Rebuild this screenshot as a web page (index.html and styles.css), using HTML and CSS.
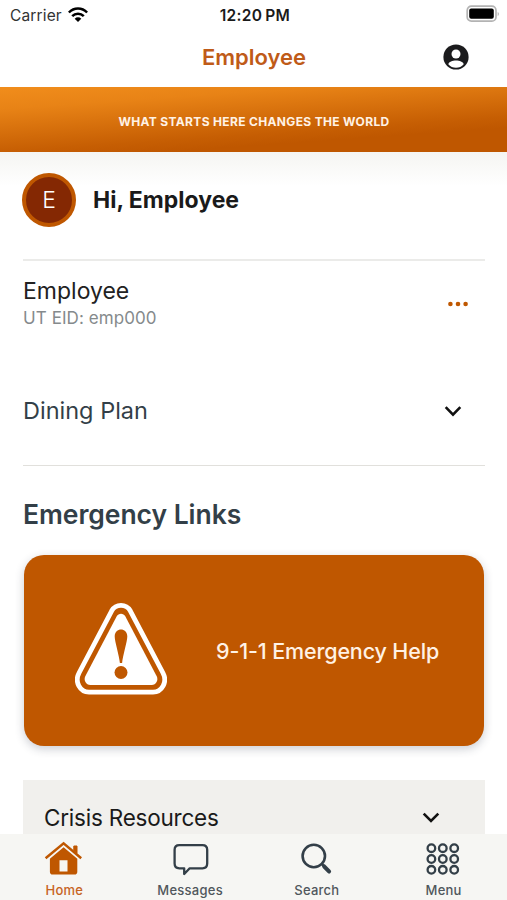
FILE: index.html
```html
<!DOCTYPE html>
<html lang="en">
<head>
<meta charset="utf-8">
<title>Employee</title>
<link rel="stylesheet" href="styles.css">
</head>
<body>
<div class="app">
  <div class="status">
    <div class="carrier"><span class="carrier-name">Carrier</span>
      <svg class="wifi" width="20" height="15" viewBox="0 0 20 15" fill="none" stroke="#000" stroke-width="2.5"><path d="M.9 5.5C6 .2 14 .2 19.1 5.5M4.2 9.1c3.2-3.3 8.4-3.3 11.6 0"/><path d="M6.7 11.7a4.7 4.7 0 0 1 6.6 0L10 15z" fill="#000" stroke="none"/></svg>
    </div>
    <span class="clock">12:20<span class="pm">PM</span></span>
    <svg class="battery" width="34" height="18" viewBox="0 0 34 18"><rect x="1.2" y="1.2" width="28.8" height="15" rx="4.2" fill="#fff" stroke="#b3b3b3" stroke-width="1.7"/><rect x="3.2" y="3.4" width="24.6" height="10.4" rx="2" fill="#000"/><path d="M31.7 7v4c1.6-.6 1.6-3.4 0-4z" fill="#b3b3b3"/></svg>
  </div>
  <header class="navbar">
    <h1 class="title">Employee</h1>
    <svg class="account" width="26" height="26" viewBox="0 0 26 26"><circle cx="13" cy="13" r="12.6" fill="#1b1b1d"/><circle cx="13" cy="10" r="4.5" fill="#fff"/><path d="M5.300 20.200c1.300-4.800 14.100-4.800 15.400 0C17 25 9 25 5.300 20.200z" fill="#fff"/></svg>
  </header>
  <div class="banner"><span class="motto">WHAT STARTS HERE CHANGES THE WORLD</span></div>
  <main class="content">
    <section class="greeting">
      <div class="avatar">E</div>
      <h2 class="hello">Hi, Employee</h2>
    </section>
    <section class="profile">
      <div><div class="name">Employee</div><div class="eid">UT EID: emp000</div></div>
      <svg class="more" width="22" height="6" viewBox="0 0 22 6" fill="#bf5700"><circle cx="3.400" cy="3" r="2.300"/><circle cx="11" cy="3" r="2.300"/><circle cx="18.600" cy="3" r="2.300"/></svg>
    </section>
    <section class="dining">
      <span class="dining-label">Dining Plan</span>
      <svg class="chevron" width="18" height="12" viewBox="0 0 18 12"><path d="M1.700 1.200 9 8.700l7.300-7.500"/></svg>
    </section>
    <h2 class="links-title">Emergency Links</h2>
    <a class="emergency">
      <svg class="warning" width="92" height="92" viewBox="0 0 92 92"><path d="M36.700 7.800c4.200-7.200 14.400-7.200 18.600 0l32.700 62.200c4.700 9-1 19.200-10 19.200H14c-9 0-14.700-10.200-10-19.200z" fill="none" stroke="#fff" stroke-width="4.800"/><path d="M41.600 13.500c2-3.600 6.800-3.600 8.800 0l31.300 59.800c2 4-.7 8.700-5 8.700H15.300c-4.300 0-7-4.700-5-8.700z" fill="#fff"/><path d="M39.700 33.500c0-9.200 12.600-9.200 12.600 0 0 5-4.500 19-5.200 26.500h-2.200c-.7-7.500-5.200-21.500-5.200-26.500z" fill="#bf5700"/><circle cx="46" cy="69.500" r="6.500" fill="#bf5700"/></svg>
      <span class="help">9-1-1 Emergency Help</span>
    </a>
    <section class="crisis">
      <span class="crisis-label">Crisis Resources</span>
      <svg class="chevron" width="18" height="12" viewBox="0 0 18 12"><path d="M1.700 1.700 9 9l7.300-7.300"/></svg>
    </section>
  </main>
  <nav class="tabs">
    <a class="tab active">
      <svg width="38" height="38" viewBox="0 0 38 38"><path d="M1.600 18.200 19.600 3.300l17.600 14.900" fill="none" stroke="#bf5700" stroke-width="2.500"/><path d="M29.800 10.500V6h3.200v7.500z" fill="#bf5700" stroke="#bf5700"/><path d="M19.600 7.300 5.900 18.800v13q0 2.800 2.800 2.800h21.800q2.800 0 2.800-2.800v-13zM15.500 20.300h8v11.200h-8z" fill="#bf5700" fill-rule="evenodd"/></svg>
      <span class="label home">Home</span>
    </a>
    <a class="tab">
      <svg width="38" height="38" viewBox="0 0 38 38"><path d="M8.300 5.100h23.200q4.700 0 4.700 4.700v13.800q0 4.700-4.700 4.700H18.700L13.200 34v-5.700H8.300q-4.700 0-4.700-4.700V9.800q0-4.700 4.700-4.700z" fill="none" stroke="#333f48" stroke-width="2.300" stroke-linejoin="round"/></svg>
      <span class="label messages">Messages</span>
    </a>
    <a class="tab">
      <svg width="38" height="38" viewBox="0 0 38 38" fill="none" stroke="#333f48" stroke-linecap="round"><circle cx="15.800" cy="16" r="11.200" stroke-width="2.600"/><path d="m24 24.200 2.400 2.400" stroke-width="2.600"/><path d="m26.300 26.600 4.700 4.800" stroke-width="4.200"/></svg>
      <span class="label search">Search</span>
    </a>
    <a class="tab">
      <svg width="38" height="38" viewBox="0 0 38 38" fill="none" stroke="#333f48" stroke-width="2.300"><circle cx="6.400" cy="8.200" r="3.800"/><circle cx="17.800" cy="8.200" r="3.800"/><circle cx="29.200" cy="8.200" r="3.800"/><circle cx="6.400" cy="19" r="3.800"/><circle cx="17.800" cy="19" r="3.800"/><circle cx="29.200" cy="19" r="3.800"/><circle cx="6.400" cy="29.800" r="3.800"/><circle cx="17.800" cy="29.800" r="3.800"/><circle cx="29.200" cy="29.800" r="3.800"/></svg>
      <span class="label menu">Menu</span>
    </a>
  </nav>
</div>
</body>
</html>
```
FILE: styles.css
```css
* { box-sizing: border-box; }
body { margin: 0; background: #fff; font-family: Inter, "Liberation Sans", sans-serif; }
h1, h2 { margin: 0; }
svg { display: block; flex: none; }
.app { width: 507px; height: 900px; display: flex; flex-direction: column; overflow: hidden; white-space: nowrap; }
.status { flex: none; height: 30px; display: grid; grid-template-columns: 1fr auto 1fr; align-items: center; padding: 0 7px 0 10px; }
.carrier { display: flex; align-items: center; gap: 6px; padding-top: 1px; }
.carrier-name { font-size: 15.500px; line-height: 20px; letter-spacing: .15px; color: #333; }
.wifi { margin-top: -2px; }
.clock { font-size: 15.500px; line-height: 20px; font-weight: 600; letter-spacing: .3px; color: #1a1a1a; padding-top: 1px; }
.pm { margin-left: 3px; }
.battery { justify-self: end; margin-top: -2px; }
.navbar { flex: none; height: 57px; display: grid; grid-template-columns: 1fr auto 1fr; align-items: center; padding: 0 38px 3px 39px; }
.title { grid-column: 2; font-size: 22px; line-height: 28px; font-weight: 600; color: #bf5b18; }
.account { justify-self: end; }
.banner { flex: none; height: 65px; display: flex; align-items: center; justify-content: center; padding-top: 4px; background: linear-gradient(176deg, #f08c1b 2%, #e88316 22%, #c65e03 65%, #bf5700 76%); }
.motto { font-size: 12px; line-height: 16px; font-weight: 700; letter-spacing: .34px; color: #fff2e5; padding-left: 1px; }
.content { flex: 1; min-height: 0; overflow: hidden; padding: 0 22px 0 23px; background: linear-gradient(#f5f5f2, #fff 34px); }
.greeting { height: 109px; display: flex; align-items: flex-start; gap: 17px; padding-top: 22px; border-bottom: 2px solid #ebebe9; }
.avatar { width: 54px; height: 54px; margin: -1px 0 0 -1px; border-radius: 50%; border: 4px solid #bf5700; background: #842803; color: #fff; font-size: 23px; font-weight: 300; line-height: 47px; text-align: center; }
.hello { font-size: 23px; line-height: 30px; font-weight: 700; color: #1a1a1a; margin-top: 11px; }
.profile { height: 87px; display: flex; justify-content: space-between; padding: 15px 16px 0 0; }
.name { font-size: 23px; line-height: 30px; color: #222; }
.eid { font-size: 17px; line-height: 25px; letter-spacing: .08px; color: #858a8c; }
.more { margin-top: 25px; }
.dining { height: 118px; display: flex; justify-content: space-between; padding: 47px 23px 0 0; border-bottom: 1px solid #e1e0dc; }
.dining-label { font-size: 23.500px; line-height: 31px; color: #333f48; }
.chevron { margin-top: 11px; fill: none; stroke: #111; stroke-width: 2.600px; }
.links-title { font-size: 26.500px; line-height: 34px; font-weight: 600; letter-spacing: -.05px; color: #333f48; margin-top: 31px; }
.emergency { height: 191px; margin: 24px 1px 0; display: flex; align-items: center; background: #bf5700; border-radius: 20px; padding-left: 51px; box-shadow: 0 3px 10px rgba(40, 50, 70, .24); }
.warning { margin-top: -3px; }
.help { font-size: 21.500px; line-height: 28px; font-weight: 500; letter-spacing: -.14px; color: #fff2e5; margin-left: 49px; }
.crisis { margin-top: 34px; height: 80px; background: #f1f0ed; display: flex; justify-content: space-between; padding: 21px 45px 0 21px; }
.crisis-label { font-size: 22.500px; line-height: 33px; letter-spacing: -.22px; color: #1a1a1a; }
.tabs { flex: none; height: 66px; display: grid; grid-template-columns: repeat(4, 1fr); background: #f6f6f3; }
.tab { display: flex; flex-direction: column; align-items: center; padding-top: 6px; }
.label { font-size: 13px; line-height: 16px; font-weight: 500; letter-spacing: .25px; color: #50575c; margin-top: 4px; }
.home { padding-left: 2px; }
.active .label { color: #c7641f; }
```
